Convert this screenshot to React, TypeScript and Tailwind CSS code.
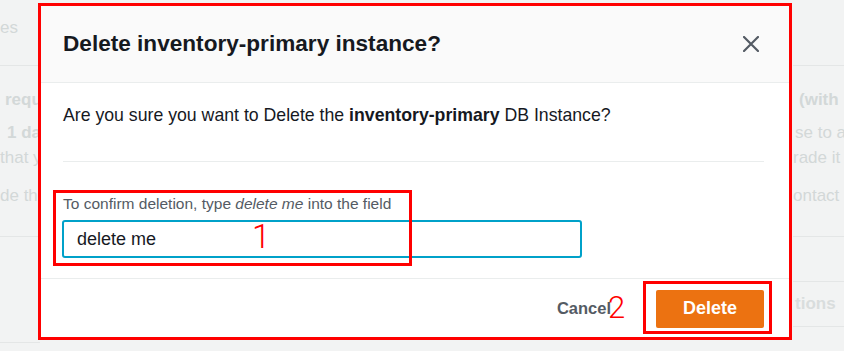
import React from "react";

function CloseIcon() {
  return (
    <svg width="16" height="16" viewBox="0 0 16 16" fill="none">
      <path d="M1 1L15 15M15 1L1 15" stroke="#545b64" strokeWidth="2.2" strokeLinecap="round" />
    </svg>
  );
}

// faded page under the modal
function Backdrop() {
  return (
    <div className="flex h-full w-full text-[17px] text-[#d3d8d8]">
      <div className="w-[40px]">
        <div className="h-[66px] border-b border-[#e4e6e6] flex items-center pb-[10px]">
          <span className="whitespace-nowrap">es</span>
        </div>
        <div className="h-[171px] border-b border-[#e4e6e6] pt-[22px] whitespace-nowrap">
          <p className="font-bold ml-[5px] leading-[24px]">required</p>
          <p className="font-bold ml-[7px] mt-[9px] leading-[24px]">1 day</p>
          <p className="leading-[24px] mt-[1px]">that you</p>
          <p className="leading-[24px] mt-[14px]">de the</p>
        </div>
        <div className="h-[106px] border-b border-[#e4e6e6]" />
      </div>
      <div className="flex-1" />
      <div className="w-[51px] overflow-hidden">
        <div className="h-[66px] border-b border-[#e4e6e6]" />
        <div className="h-[171px] border-b border-[#e4e6e6] pt-[22px] whitespace-nowrap">
          <p className="font-bold ml-[6px] leading-[24px]">(with</p>
          <p className="ml-[2px] mt-[9px] leading-[24px]">se to a</p>
          <p className="mt-[1px] leading-[24px]">rade it</p>
          <p className="mt-[14px] leading-[24px]">ontact</p>
        </div>
        <div className="h-[45px] border-b border-[#e4e6e6]" />
        <div className="h-[45px] border-b border-[#e4e6e6] flex items-center whitespace-nowrap">
          <span className="font-bold text-[#d9dddd] ml-[2px]">tions</span>
        </div>
      </div>
    </div>
  );
}

export default function App() {
  return (
    <div className="relative w-[844px] h-[351px] overflow-hidden bg-[#f2f3f3] font-['Liberation_Sans',Arial,sans-serif]">
      <Backdrop />

      {/* modal */}
      <div className="absolute left-[40px] top-[5px] w-[750px] h-[333px] bg-white flex flex-col">
        <div className="h-[78px] bg-[#fafafa] border-b border-[#eaeded] flex items-center justify-between pl-[23px] pr-[31px]">
          <h1 className="text-[22.6px] font-bold text-[#16191f]">Delete inventory-primary instance?</h1>
          <CloseIcon />
        </div>

        <div className="pl-[23px] pr-[26px] flex-1 flex flex-col">
          <p className="mt-[21px] text-[17.7px] leading-[22px] text-[#16191f]">
            Are you sure you want to Delete the <b>inventory-primary</b> DB Instance?
          </p>
          <div className="mt-[35px] border-t border-[#eaeded]" />
          <label className="mt-[32px] text-[15.5px] leading-[20px] text-[#545b64]">
            To confirm deletion, type <i>delete me</i> into the field
          </label>
          <div className="mt-[6px] w-[520px] h-[38px] -ml-[1px] border-2 border-[#00a1c9] rounded-[3px] flex items-center pl-[13px] text-[18px] text-[#16191f]">
            delete me
          </div>
        </div>

        <div className="h-[60px] border-t border-[#eaeded] flex items-center justify-end gap-[45px] pr-[26px]">
          <button className="text-[16.5px] font-bold text-[#545b64]">Cancel</button>
          <button className="w-[108px] h-[38px] rounded-[2px] bg-[#ec7211] text-white text-[18px] font-bold">
            Delete
          </button>
        </div>
      </div>

      {/* annotations drawn over the screenshot */}
      <div className="absolute left-[38px] top-[3px] w-[754px] h-[337px] border-[3px] border-[#ff0000]" />
      <div className="absolute left-[53px] top-[190px] w-[359px] h-[76px] border-[3px] border-[#ff0000]" />
      <div className="absolute left-[643px] top-[281px] w-[129px] h-[53px] border-[3px] border-[#ff0000]" />
      <span className="absolute left-[252px] top-[219px] text-[33px] leading-[36px] font-light font-['Roboto',sans-serif] text-[#ff0000]">1</span>
      <span className="absolute left-[608px] top-[291px] text-[31px] leading-[34px] font-light font-['Roboto',sans-serif] text-[#ff0000]">2</span>
    </div>
  );
}
